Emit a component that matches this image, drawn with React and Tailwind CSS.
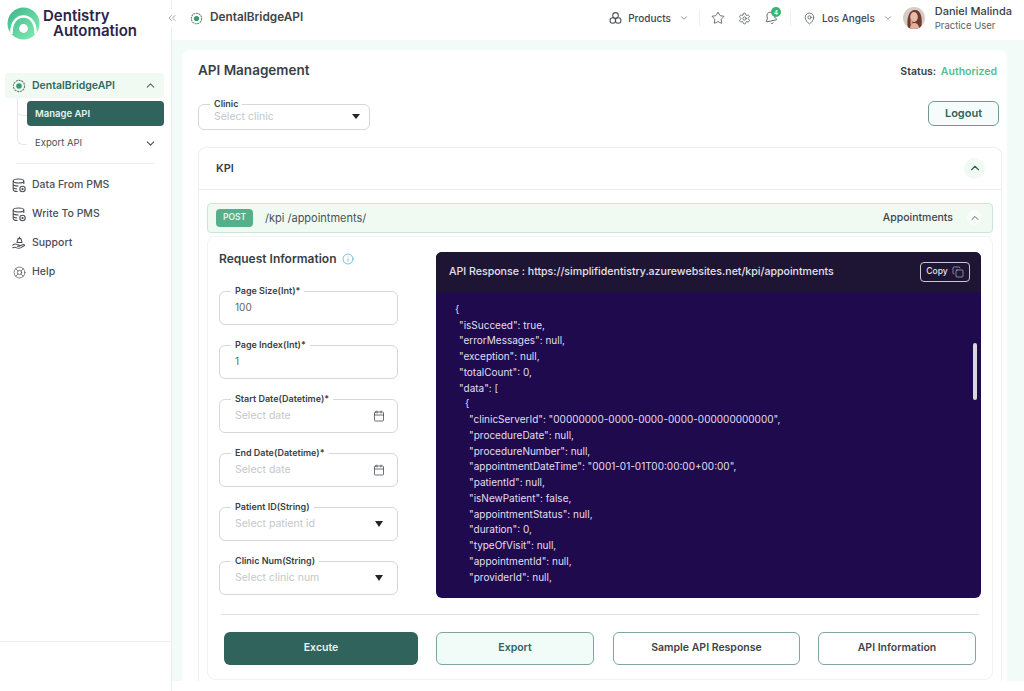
import { ChevronDown, ChevronUp, ChevronsLeft, Star, Settings, Bell, MapPin, Calendar, Info, Copy, LifeBuoy } from 'lucide-react';

const FONT = { fontFamily: 'Inter, "Noto Sans", sans-serif' };

const JSON_LINES = [
  [0, '{'],
  [1, '"isSucceed": true,'],
  [1, '"errorMessages": null,'],
  [1, '"exception": null,'],
  [1, '"totalCount": 0,'],
  [1, '"data": ['],
  [2, '{'],
  [3, '"clinicServerId": "00000000-0000-0000-0000-000000000000",'],
  [3, '"procedureDate": null,'],
  [3, '"procedureNumber": null,'],
  [3, '"appointmentDateTime": "0001-01-01T00:00:00+00:00",'],
  [3, '"patientId": null,'],
  [3, '"isNewPatient": false,'],
  [3, '"appointmentStatus": null,'],
  [3, '"duration": 0,'],
  [3, '"typeOfVisit": null,'],
  [3, '"appointmentId": null,'],
  [3, '"providerId": null,'],
];

const INDENT = ['pl-0', 'pl-[4px]', 'pl-[10px]', 'pl-[14px]'];

function Logo() {
  return (
    <svg width="33" height="33" viewBox="0 0 33 33" fill="none" className="shrink-0">
      <defs>
        <linearGradient id="lg" x1="0" y1="0" x2="1" y2="1">
          <stop offset="0" stopColor="#3bb58a" />
          <stop offset="1" stopColor="#86eeb4" />
        </linearGradient>
      </defs>
      <circle cx="16.5" cy="16.5" r="16" fill="url(#lg)" />
      <path d="M4.5 27C4 15 10 9.5 16.5 9.5S29 15 28.5 27" stroke="#fff" strokeWidth="2.6" />
      <circle cx="16.5" cy="21.5" r="4.4" fill="#fff" />
    </svg>
  );
}

function BridgeIcon({ size = 14 }) {
  return (
    <svg width={size} height={size} viewBox="0 0 16 16" fill="none">
      <circle cx="8" cy="8" r="6.4" stroke="#6b7f78" strokeWidth="1.3" strokeDasharray="2.4 0.8" />
      <circle cx="8" cy="8" r="3.2" fill="#2f9e6e" />
    </svg>
  );
}

function DbIcon() {
  return (
    <svg width="14" height="15" viewBox="0 0 14 15" fill="none" stroke="#4b4f55" strokeWidth="1.1">
      <ellipse cx="6.5" cy="3" rx="5.3" ry="2" />
      <path d="M1.2 3v8.5c0 1.1 2.2 2 4.4 2M11.8 3v3M1.2 6c0 1.1 2.4 2 5.3 2M1.2 9c0 1 1.8 1.8 4 2" />
      <circle cx="10.5" cy="11" r="2.7" />
      <path d="M9.3 11h2.4M10.5 9.9v2.2" />
    </svg>
  );
}

function SupportIcon() {
  return (
    <svg width="14" height="14" viewBox="0 0 14 14" fill="none" stroke="#4b4f55" strokeWidth="1.05" strokeLinecap="round" strokeLinejoin="round">
      <path d="M7.5 1v1.6M6 2.6h3L10 6.4H5z" />
      <path d="M.8 9.2c1.4-1.2 2.8-1.4 4-.8l2.2.6c.8.2.8 1.2 0 1.2H5.4" />
      <path d="M7.4 10l4-1.4c1-.3 1.5.6.8 1.1l-3.6 2.2c-1.4.7-3.4.3-4.6-.3-1-.5-2-.3-3.2.2" />
    </svg>
  );
}

function ProductsIcon() {
  return (
    <svg width="13" height="14" viewBox="0 0 14 14" fill="none" stroke="#4b4f55" strokeWidth="1.1">
      <circle cx="7" cy="4.2" r="3" />
      <circle cx="4.1" cy="9.7" r="3" />
      <circle cx="9.9" cy="9.7" r="3" />
    </svg>
  );
}

function Avatar() {
  return (
    <svg width="22" height="22" viewBox="0 0 22 22" className="shrink-0 rounded-full">
      <rect width="22" height="22" fill="#d6ccc6" />
      <path d="M5 22C3 11 6 3 12 3s8 8 6 19z" fill="#6f3a2e" />
      <ellipse cx="11" cy="10" rx="3.8" ry="5" fill="#e8bda8" />
      <path d="M7 22c0-4 2-6 4.5-6s4.5 2 4.5 6z" fill="#e4b29c" />
      <rect x="7.5" y="12" width="2" height="6" rx="1" fill="#d99f88" />
    </svg>
  );
}

function Field({ label, value, placeholder, icon }) {
  return (
    <div className="relative flex h-[34px] w-[179px] items-center justify-between rounded-md border border-[#d4d8d8] pl-[15px] pr-[12px]">
      <span className="absolute -top-[8px] left-[11px] bg-white px-[4px] text-[9px] font-semibold leading-[14px] text-[#3a3f45]">{label}</span>
      {value
        ? <span className="text-[10px] text-[#5f6468]">{value}</span>
        : <span className="text-[10.5px] text-[#c4c8ca]">{placeholder}</span>}
      {icon === 'date' && <Calendar size={12} strokeWidth={1.5} className="text-[#3f444a]" />}
      {icon === 'select' && <span className="mr-[2px] h-0 w-0 border-x-[4px] border-t-[6px] border-x-transparent border-t-[#22262a]" />}
    </div>
  );
}

function Btn({ className, children }) {
  return (
    <button className={`h-[33px] rounded-md text-[10.5px] font-semibold ${className}`}>{children}</button>
  );
}

export default function App() {
  return (
    <div style={FONT} className="flex h-[691px] w-[1024px] overflow-hidden bg-white text-[#3a3f45]">
      {/* Sidebar */}
      <aside className="relative w-[172px] shrink-0 border-r border-[#e9eeec] bg-white">
        <div className="flex h-[40px] items-center pl-[7px] pt-[6px]">
          <Logo />
          <div className="ml-[3px] text-[15px] font-semibold leading-[15px] text-[#2b2447]">
            <div>Dentistry</div>
            <div className="pl-[10px]">Automation</div>
          </div>
        </div>

        <div className="mt-[33px] pl-[5px] pr-[7px]">
          <div className="flex h-[25px] items-center justify-between rounded bg-[#f0faf3] pl-[7px] pr-[7px]">
            <div className="flex items-center gap-[6px]">
              <BridgeIcon />
              <span className="text-[10.5px] font-semibold text-[#2f6b5c]">DentalBridgeAPI</span>
            </div>
            <ChevronUp size={13} className="text-[#5b6167]" />
          </div>
          <div className="relative mt-[3px] pl-[22px]">
            <div className="absolute left-[12px] -top-[3px] h-[47px] w-[10px] rounded-bl-md border-b border-l border-[#e4e8e6]" />
            <div className="absolute left-[12px] -top-[3px] h-[18px] w-[10px] rounded-bl-md border-b border-[#e4e8e6]" />
            <div className="flex h-[25px] items-center rounded-sm bg-[#2f635c] pl-[8px] pt-[1px] text-[9.5px] font-semibold text-[#e7f3ef]">Manage API</div>
            <div className="mt-[4px] flex h-[25px] items-center justify-between pl-[8px] pr-[7px] pt-[1px] text-[9.5px] text-[#4b5056]">
              <span>Export API</span>
              <ChevronDown size={13} />
            </div>
          </div>
        </div>

        <div className="mx-[16px] mt-[8px] h-px bg-[#eceeed]" />

        <nav className="mt-[11px] flex flex-col gap-[9px] pl-[12px] text-[10.5px] font-medium text-[#4b4f55]">
          <div className="flex h-[20px] items-center gap-[6px]"><DbIcon />Data From PMS</div>
          <div className="flex h-[20px] items-center gap-[6px]"><DbIcon />Write To PMS</div>
          <div className="flex h-[20px] items-center gap-[6px]"><SupportIcon />Support</div>
          <div className="flex h-[20px] items-center gap-[6px]"><LifeBuoy size={13} strokeWidth={1.3} className="mx-[0.5px]" />Help</div>
        </nav>

        <div className="absolute bottom-[49px] left-0 right-0 h-px bg-[#eef0ef]" />
        <button className="absolute -right-[10px] top-[9px] flex h-[18px] w-[18px] items-center justify-center rounded-full bg-white text-[#7b8086]">
          <ChevronsLeft size={12} strokeWidth={1.4} />
        </button>
      </aside>

      <div className="flex min-w-0 flex-1 flex-col">
        {/* Top bar */}
        <header className="flex h-[40px] shrink-0 items-center justify-between bg-white pb-[4px] pl-[18px] pr-[12px] shadow-[0_1px_3px_rgba(90,160,140,0.15)]">
          <div className="flex items-center gap-[7px]">
            <BridgeIcon size={13} />
            <span className="text-[11.8px] font-semibold text-[#3f444a]">DentalBridgeAPI</span>
          </div>
          <div className="flex items-center text-[#3f444a]">
            <ProductsIcon />
            <span className="ml-[6px] text-[10px] font-medium">Products</span>
            <ChevronDown size={10} className="ml-[8px] text-[#7b8086]" />
            <div className="ml-[10px] mr-[11px] h-[16px] w-px bg-[#eceeed]" />
            <Star size={14} strokeWidth={1.3} />
            <Settings size={13} strokeWidth={1.3} className="ml-[13px]" />
            <div className="relative ml-[13px]">
              <Bell size={14} strokeWidth={1.3} className="-rotate-12" />
              <span className="absolute -right-[3px] -top-[4px] flex h-[10px] w-[10px] items-center justify-center rounded-full bg-[#3cb371] text-[6px] font-semibold text-white">4</span>
            </div>
            <div className="mx-[12px] h-[16px] w-px bg-[#eceeed]" />
            <MapPin size={13} strokeWidth={1.3} />
            <span className="ml-[6px] text-[10px] font-medium">Los Angels</span>
            <ChevronDown size={10} className="ml-[8px] text-[#7b8086]" />
            <div className="ml-[10px]"><Avatar /></div>
            <div className="ml-[10px] leading-none">
              <div className="text-[11px] font-medium text-[#3a3f45]">Daniel Malinda</div>
              <div className="mt-[4px] text-[9.5px] text-[#5b6167]">Practice User</div>
            </div>
          </div>
        </header>

        {/* Page */}
        <main className="h-[641px] shrink-0 bg-[#f3fbf9] pl-[10px] pr-[17px] pt-[10px]">
          <div className="h-[631px] rounded-t-lg bg-white pl-[16px] pr-[5px]">
            <div className="flex items-start justify-between pr-[5px] pt-[12px]">
              <h1 className="text-[13.5px] font-semibold leading-[16px] text-[#3a3f45]">API Management</h1>
              <div className="pt-[2px] text-[10.5px] font-semibold">
                Status: <span className="ml-[2px] text-[#55bd8f]">Authorized</span>
              </div>
            </div>

            <div className="mt-[24px] flex items-start justify-between pr-[3px]">
              <div className="relative flex h-[26px] w-[172px] items-center justify-between rounded-md border border-[#d4d8d8] pl-[15px] pr-[9px]">
                <span className="absolute -top-[8px] left-[11px] bg-white px-[4px] text-[9px] font-semibold leading-[14px]">Clinic</span>
                <span className="text-[10.5px] text-[#c4c8ca]">Select clinic</span>
                <span className="h-0 w-0 border-x-[4px] border-t-[5px] border-x-transparent border-t-[#22262a]" />
              </div>
              <button className="-mt-[3px] h-[25px] w-[71px] rounded-md border border-[#6f9b93] bg-[#f6fcfb] text-[11px] font-semibold text-[#2f635c]">Logout</button>
            </div>

            {/* KPI card */}
            <div className="mt-[17px] h-[534px] overflow-hidden rounded-t-lg border-x border-t border-[#eef0ef]">
              <div className="flex h-[42px] items-center justify-between border-b border-[#eceeed] pl-[17px] pr-[16px]">
                <span className="text-[11px] font-semibold text-[#3a3f45]">KPI</span>
                <span className="flex h-[21px] w-[21px] items-center justify-center rounded-full bg-[#f0faf3] text-[#2f635c]">
                  <ChevronUp size={14} />
                </span>
              </div>

              <div className="px-[8px] pt-[13px]">
                <div className="flex h-[30px] items-center justify-between rounded border border-[#c9e6da] bg-[#f0faf3] pl-[8px] pr-[8px]">
                  <div className="flex items-center">
                    <span className="flex h-[18px] w-[37px] items-center justify-center rounded-sm bg-[#55b08a] text-[8.5px] font-semibold text-[#e7f6ef]">POST</span>
                    <span className="ml-[12px] text-[11px] text-[#4b5056]">/kpi /appointments/</span>
                  </div>
                  <div className="flex items-center">
                    <span className="text-[10.5px] font-medium text-[#3f444a]">Appointments</span>
                    <span className="ml-[14px] mr-[2px] flex h-[15px] w-[15px] items-center justify-center rounded-full bg-white/60 text-[#5b6167]">
                      <ChevronUp size={12} />
                    </span>
                  </div>
                </div>

                {/* Request + response */}
                <div className="mt-[3px] h-[444px] rounded-lg border border-[#f1f3f2] px-[11px] pt-[15px]">
                  <div className="flex">
                    <div className="w-[217px] shrink-0">
                      <div className="-mt-[1px] flex items-center gap-[5px]">
                        <h2 className="text-[12px] font-semibold leading-[16px] text-[#3a3f45]">Request Information</h2>
                        <Info size={12} strokeWidth={1.4} className="text-[#3fa7c9]" />
                      </div>
                      <div className="mt-[24px] flex flex-col gap-[20px]">
                        <Field label="Page Size(Int)*" value="100" />
                        <Field label="Page Index(Int)*" value="1" />
                        <Field label="Start Date(Datetime)*" placeholder="Select date" icon="date" />
                        <Field label="End Date(Datetime)*" placeholder="Select date" icon="date" />
                        <Field label="Patient ID(String)" placeholder="Select patient id" icon="select" />
                        <Field label="Clinic Num(String)" placeholder="Select clinic num" icon="select" />
                      </div>
                    </div>

                    <div className="h-[346px] w-[545px] overflow-hidden rounded-md bg-[#1e0a4c]">
                      <div className="flex h-[40px] items-center justify-between bg-[#1d1533] pl-[13px] pr-[11px]">
                        <span className="text-[10.6px] font-medium text-[#e4e2ea]">API Response : https://simplifidentistry.azurewebsites.net/kpi/appointments</span>
                        <button className="flex h-[20px] w-[50px] items-center justify-center gap-[4px] rounded-sm border border-[#c9c7d2] text-[8.5px] font-medium text-[#e4e2ea]">
                          Copy <Copy size={12} strokeWidth={1.1} />
                        </button>
                      </div>
                      <div className="relative h-[306px] overflow-hidden pl-[19px] pt-[10px]">
                        {JSON_LINES.map(([depth, line], i) => (
                          <div key={i} className={`h-[15.75px] text-[10px] leading-[15.75px] text-[#e2dff0] ${INDENT[depth]}`}>{line}</div>
                        ))}
                        <div className="absolute right-[4px] top-[51px] h-[57px] w-[4px] rounded-full bg-[#d8d6e2]" />
                      </div>
                    </div>
                  </div>

                  <div className="mx-[2px] mt-[16px] h-px bg-[#dfe3e2]" />

                  <div className="mt-[17px] flex pl-[5px]">
                    <Btn className="w-[194px] bg-[#2f635c] text-[#eaf4f1]">Excute</Btn>
                    <Btn className="ml-[18px] w-[158px] border border-[#7fa59e] bg-[#f1fbf8] text-[#2f635c]">Export</Btn>
                    <Btn className="ml-[19px] w-[187px] border border-[#7fa59e] bg-white text-[#3f444a]">Sample API Response</Btn>
                    <Btn className="ml-[18px] w-[158px] border border-[#7fa59e] bg-white text-[#3f444a]">API Information</Btn>
                  </div>
                </div>
              </div>
            </div>
          </div>
        </main>
      </div>
    </div>
  );
}
